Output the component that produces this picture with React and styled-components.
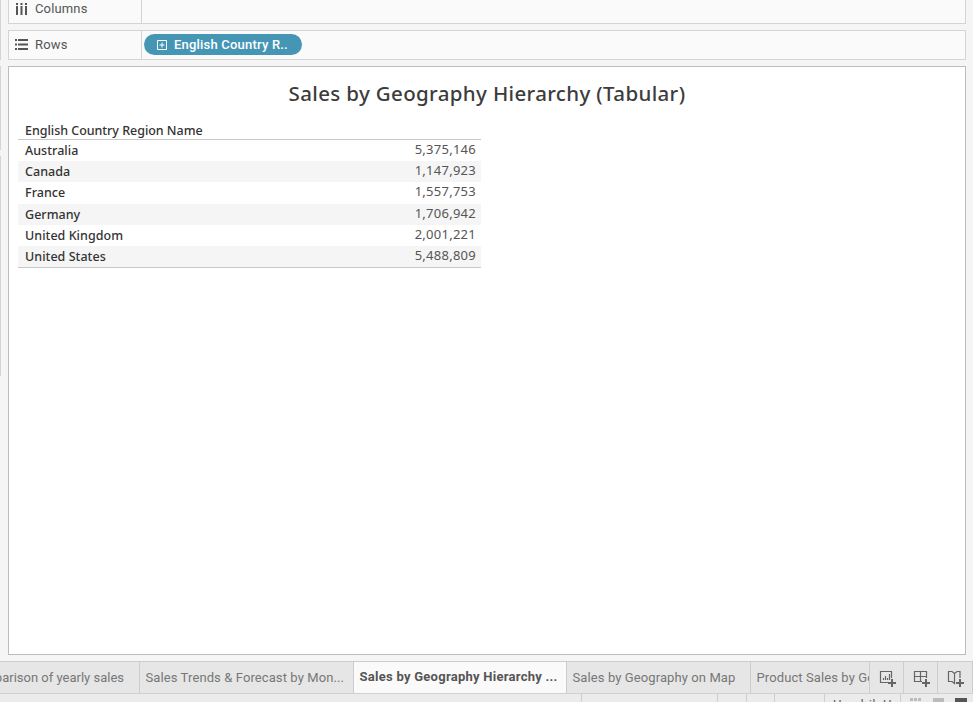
import React from 'react';
import styled, { createGlobalStyle } from 'styled-components';

const Global = createGlobalStyle`
  *{box-sizing:border-box}
  body{margin:0;background:#f5f5f5;overflow:hidden}
`;
const Frame = styled.div`
  width:973px;height:702px;display:grid;grid-template-columns:8px 958px;
  grid-template-rows:661px 33px 8px;overflow:hidden;
  font-family:Roboto,"Liberation Sans",sans-serif;color:#555;
`;
const Gutter = styled.div`display:flex;flex-direction:column;`;
const Edge = styled.div`
  width:1px;height:${p => p.$h}px;margin-top:${p => p.$gap || 0}px;background:#d4d4d4;
`;
const Work = styled.main`display:flex;flex-direction:column;`;
const Shelf = styled.section`
  display:flex;height:${p => p.$h}px;margin-bottom:${p => p.$gap}px;background:#fafafa;
  border:1px solid #d4d4d4;${p => p.$cut && 'border-top:0;'}
`;
const ShelfLabel = styled.div`
  display:flex;align-items:center;gap:7px;width:133px;padding-left:5px;border-right:1px solid #d4d4d4;
  font-size:13px;letter-spacing:.15px;padding-bottom:${p => p.$lift || 0}px;
`;
const Pill = styled.div`
  display:flex;align-items:center;gap:6px;width:158px;height:21px;margin:3px 0 0 2px;padding-left:13px;
  border-radius:11px;background:#4596b5;color:#fff;font-size:13px;font-weight:500;letter-spacing:.2px;white-space:nowrap;
`;
const Sheet = styled.section`
  height:589px;background:#fff;border:1px solid #bdbdbd;
  font-family:"Noto Sans",sans-serif;color:#333;
`;
const Title = styled.h1`
  margin:10px 0 0;height:33px;line-height:33px;text-align:center;font-size:20.5px;font-weight:500;letter-spacing:.35px;color:#3c3c3c;
`;
const Table = styled.div`width:463px;margin:12px 0 0 9px;`;
const Head = styled.div`
  height:18px;line-height:18px;padding-left:7px;font-size:12.5px;font-weight:500;letter-spacing:-.03px;border-bottom:1px solid #c8c8c8;
`;
const Body = styled.div`height:128px;display:flex;flex-direction:column;border-bottom:1px solid #c8c8c8;`;
const Row = styled.div`
  display:flex;justify-content:space-between;flex:1;min-height:0;line-height:22px;padding:0 5px 0 7px;
  background:${p => p.$band ? '#f5f5f5' : '#fff'};font-size:12.5px;font-weight:500;letter-spacing:.04px;
`;
const Value = styled.span`font-weight:400;font-size:13px;line-height:19px;letter-spacing:.26px;color:#555;`;
const Tabs = styled.nav`
  grid-column:1 / -1;display:flex;width:973px;background:#e6e6e6;border-top:1px solid #cdcdcd;border-bottom:1px solid #d0d0d0;
`;
const Tab = styled.div`
  width:${p => p.$w}px;flex:none;overflow:hidden;white-space:nowrap;border-right:1px solid #cdcdcd;
  display:flex;justify-content:${p => p.$end ? 'flex-end' : 'flex-start'};padding:0 ${p => p.$end ? 15 : 0}px 0 ${p => p.$end ? 0 : 5.5}px;
  line-height:${p => p.$on ? 30 : 32}px;font-size:13px;letter-spacing:${p => p.$ls || 0}px;
  color:${p => p.$on ? '#555' : '#777'};font-weight:${p => p.$on ? 700 : 400};background:${p => p.$on ? '#fafafa' : 'transparent'};
`;
const TabAction = styled.button`
  width:${p => p.$w}px;flex:none;border:0;border-right:1px solid #cdcdcd;background:none;padding:2px 0 0 2px;
  display:flex;align-items:center;justify-content:center;
`;
const Status = styled.footer`
  grid-column:1 / -1;display:flex;width:973px;background:#ebebeb;overflow:hidden;
`;
const Cell = styled.div`
  width:${p => p.$w}px;flex:none;height:8px;border-right:1px solid #cdcdcd;padding:4px 0 0 8px;
  font-size:12px;line-height:14px;letter-spacing:.7px;white-space:nowrap;overflow:hidden;
`;
const Views = styled.div`display:flex;padding:4px 0 0 8px;`;

const ColumnsIcon = () => (
  <svg width="14" height="14" fill="#555"><path d="M2 1h2v2H2zM6.5 1h2v2h-2zM11 1h2v2h-2zM2 4h2v9H2zM6.5 4h2v9h-2zM11 4h2v9h-2z" /></svg>
);
const RowsIcon = () => (
  <svg width="14" height="14" fill="#555"><path d="M1 1h2v2H1zM1 5.5h2v2H1zM1 10h2v2H1zM4 1h10v2H4zM4 5.5h10v2H4zM4 10h10v2H4z" /></svg>
);
const PlusBox = () => (
  <svg width="11" height="11" fill="none" stroke="#fff"><path d="M.5 1.5h9v9h-9zM2.5 6h5M5 3.5v5" /></svg>
);
const paths = {
  sheet: 'M12.5 8V1.5h-11v11H9M4.5 8v2M6.5 6v4M8.5 8v2M10.5 4v6',
  dash: 'M13.5 8V1.5h-12v10H9M7.5 1.5v10M1.5 6.5h12',
  story: 'M7.5 3.5L5 1.5H1.5v10H5l2.5 2V3.5L10 1.5h3V8',
};
const AddIcon = ({ kind }) => (
  <svg width="18" height="18" fill="none" stroke="#666">
    <path d={paths[kind]} strokeWidth="1.2" /><path d="M13 9v8M9 13h8" strokeWidth="2" />
  </svg>
);
const ViewIcons = () => (
  <svg width="60" height="4"><path d="M1 0h3v3H1zM5 0h3v3H5zM9 0h3v3H9zM24 0h11v4H24z" fill="#bbb" /><path d="M46 0h12v4H46z" fill="#555" /></svg>
);

const rows = [
  ['Australia', '5,375,146'], ['Canada', '1,147,923'], ['France', '1,557,753'],
  ['Germany', '1,706,942'], ['United Kingdom', '2,001,221'], ['United States', '5,488,809'],
];

export default function App() {
  return (
    <Frame>
      <Global />
      <Gutter><Edge $h={60} /><Edge $h={84} $gap={6} /><Edge $h={220} $gap={6} /></Gutter>
      <Work>
        <Shelf $h={24} $gap={6} $cut><ShelfLabel $lift={6}><ColumnsIcon />Columns</ShelfLabel></Shelf>
        <Shelf $h={30} $gap={6}>
          <ShelfLabel $lift={1}><RowsIcon />Rows</ShelfLabel>
          <Pill><PlusBox />English Country R..</Pill>
        </Shelf>
        <Sheet>
          <Title>Sales by Geography Hierarchy (Tabular)</Title>
          <Table>
            <Head>English Country Region Name</Head>
            <Body>{rows.map(([n, v], i) => <Row key={n} $band={i % 2 === 1}>{n}<Value>{v}</Value></Row>)}</Body>
          </Table>
        </Sheet>
      </Work>
      <Tabs>
        <Tab $w={140} $end>Comparison of yearly sales</Tab>
        <Tab $w={214} $ls={0.1}>Sales Trends &amp; Forecast by Mon...</Tab>
        <Tab $w={213} $on $ls={0.26}>Sales by Geography Hierarchy ...</Tab>
        <Tab $w={184} $ls={0.1}>Sales by Geography on Map</Tab>
        <Tab $w={119} $ls={0.1}>Product Sales by Geography</Tab>
        <TabAction $w={34}><AddIcon kind="sheet" /></TabAction>
        <TabAction $w={34}><AddIcon kind="dash" /></TabAction>
        <TabAction $w={35}><AddIcon kind="story" /></TabAction>
      </Tabs>
      <Status>
        <Cell $w={582} /><Cell $w={136} /><Cell $w={29} /><Cell $w={28} /><Cell $w={50} /><Cell $w={76}>Hendrik H</Cell>
        <Views><ViewIcons /></Views>
      </Status>
    </Frame>
  );
}
